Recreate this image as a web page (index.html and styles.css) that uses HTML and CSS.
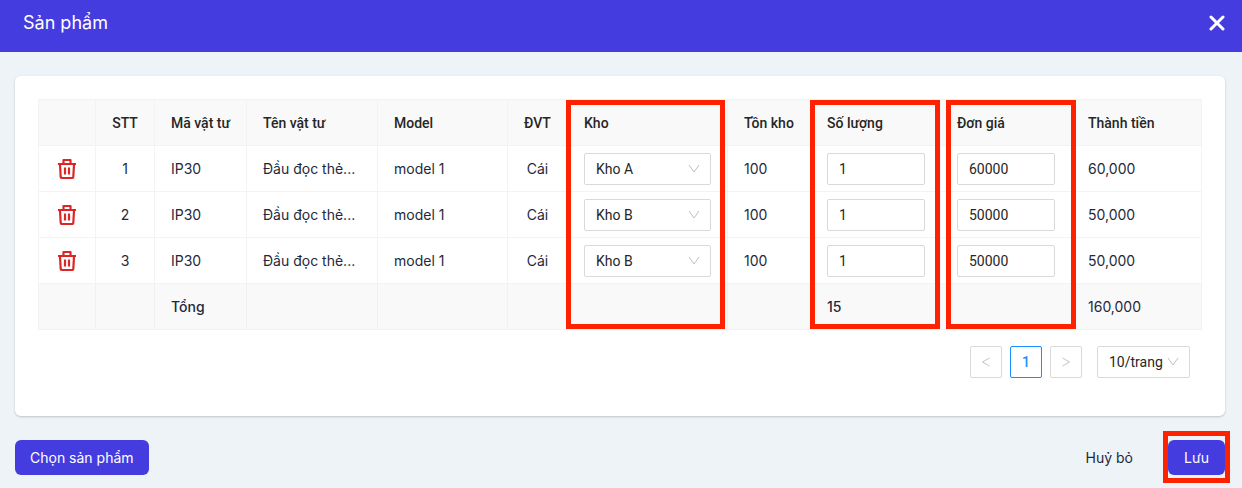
FILE: index.html
```
<!DOCTYPE html>
<html lang="vi">
<head>
<meta charset="utf-8">
<meta name="viewport" content="width=device-width, initial-scale=1">
<title>Sản phẩm</title>
<link rel="stylesheet" href="styles.css">
</head>
<body>
<svg class="sprite" aria-hidden="true">
  <symbol id="trash" viewBox="0 0 20 22">
    <path d="M1 6h18M6.500 5.500V2h7V5.500M3 6.500l.7 12.500Q3.900 20 4.900 20h10.200Q16.100 20 16.300 19L17 6.500M8 9.500v7M12 9.500v7" fill="none" stroke="currentColor" stroke-width="2.200" stroke-linejoin="round"/>
  </symbol>
  <symbol id="down" viewBox="0 0 12 12">
    <path d="M1 2L6 9L11 2" fill="none" stroke="currentColor"/>
  </symbol>
</svg>
<header class="topbar">
  <h1 class="title">Sản phẩm</h1>
  <button class="close" type="button" aria-label="Đóng">
    <svg width="16" height="16" viewBox="0 0 16 16" aria-hidden="true"><path d="M2 2l12 12M14 2L2 14" stroke="currentColor" stroke-width="3" stroke-linecap="round"/></svg>
  </button>
</header>
<main class="content">
  <section class="card">
    <table class="table">
      <colgroup>
        <col class="w-action"><col class="w-index"><col class="w-code"><col class="w-name"><col class="w-model"><col class="w-unit"><col class="w-store"><col class="w-stock"><col class="w-qty"><col class="w-price"><col class="w-total">
      </colgroup>
      <thead>
        <tr>
          <th></th><th class="center">STT</th><th>Mã vật tư</th><th>Tên vật tư</th><th>Model</th><th class="center">ĐVT</th>
          <th>Kho<span class="mark mark-store"></span></th><th>Tồn kho</th>
          <th>Số lượng<span class="mark mark-qty"></span></th>
          <th>Đơn giá<span class="mark mark-price"></span></th><th>Thành tiền</th>
        </tr>
      </thead>
      <tbody>
        <tr>
          <td class="center"><button class="delete" type="button" aria-label="Xoá dòng 1"><svg width="20" height="22"><use href="#trash"/></svg></button></td>
          <td class="center">1</td><td>IP30</td><td>Đầu đọc thẻ...</td><td>model 1</td><td class="center">Cái</td>
          <td><div class="picker"><select class="field" aria-label="Kho dòng 1"><option selected>Kho A</option><option>Kho B</option></select><svg class="arrow" width="12" height="12"><use href="#down"/></svg></div></td>
          <td>100</td>
          <td><input class="field number" type="text" value="1" aria-label="Số lượng dòng 1"></td>
          <td><input class="field number" type="text" value="60000" aria-label="Đơn giá dòng 1"></td>
          <td>60,000</td>
        </tr>
        <tr>
          <td class="center"><button class="delete" type="button" aria-label="Xoá dòng 2"><svg width="20" height="22"><use href="#trash"/></svg></button></td>
          <td class="center">2</td><td>IP30</td><td>Đầu đọc thẻ...</td><td>model 1</td><td class="center">Cái</td>
          <td><div class="picker"><select class="field" aria-label="Kho dòng 2"><option>Kho A</option><option selected>Kho B</option></select><svg class="arrow" width="12" height="12"><use href="#down"/></svg></div></td>
          <td>100</td>
          <td><input class="field number" type="text" value="1" aria-label="Số lượng dòng 2"></td>
          <td><input class="field number" type="text" value="50000" aria-label="Đơn giá dòng 2"></td>
          <td>50,000</td>
        </tr>
        <tr>
          <td class="center"><button class="delete" type="button" aria-label="Xoá dòng 3"><svg width="20" height="22"><use href="#trash"/></svg></button></td>
          <td class="center">3</td><td>IP30</td><td>Đầu đọc thẻ...</td><td>model 1</td><td class="center">Cái</td>
          <td><div class="picker"><select class="field" aria-label="Kho dòng 3"><option>Kho A</option><option selected>Kho B</option></select><svg class="arrow" width="12" height="12"><use href="#down"/></svg></div></td>
          <td>100</td>
          <td><input class="field number" type="text" value="1" aria-label="Số lượng dòng 3"></td>
          <td><input class="field number" type="text" value="50000" aria-label="Đơn giá dòng 3"></td>
          <td>50,000</td>
        </tr>
      </tbody>
      <tfoot>
        <tr><td></td><td></td><td class="strong">Tổng</td><td></td><td></td><td></td><td></td><td></td><td class="strong">15</td><td></td><td>160,000</td></tr>
      </tfoot>
    </table>
    <nav class="pagination" aria-label="Phân trang">
      <button class="page" type="button" disabled aria-label="Trang trước"><svg width="12" height="12" viewBox="0 0 12 12"><path d="M9.500 2L2.500 6L9.500 10" fill="none" stroke="currentColor"/></svg></button>
      <button class="page current" type="button" aria-current="page">1</button>
      <button class="page" type="button" disabled aria-label="Trang sau"><svg width="12" height="12" viewBox="0 0 12 12"><path d="M2.500 2L9.500 6L2.500 10" fill="none" stroke="currentColor"/></svg></button>
      <div class="picker page-size"><select class="field" aria-label="Số dòng mỗi trang"><option>10/trang</option></select><svg class="arrow" width="12" height="12"><use href="#down"/></svg></div>
    </nav>
  </section>
  <footer class="actions">
    <button class="btn primary" type="button">Chọn sản phẩm</button>
    <div class="right">
      <button class="btn plain" type="button">Huỷ bỏ</button>
      <span class="save"><button class="btn primary" type="button">Lưu</button><span class="mark mark-save"></span></span>
    </div>
  </footer>
</main>
</body>
</html>
```
FILE: styles.css
```
* { box-sizing: border-box; }
body {
  margin: 0;
  background: #eef3f8;
  color: #1e293b;
  font: 14px/20px Inter, "Noto Sans", sans-serif;
}
button, input, select { font: inherit; color: inherit; margin: 0; }
button { cursor: pointer; }
.sprite { display: none; }
.topbar {
  display: flex;
  align-items: center;
  justify-content: space-between;
  height: 52px;
  padding: 0 17px 6px 23px;
  background: #453ce0;
  color: #fff;
}
.title { margin: 0; font-size: 18px; font-weight: 400; line-height: 28px; }
.close { display: flex; padding: 0; border: 0; background: none; color: #fff; }
.content { padding: 24px 17px 12px 15px; }
.card {
  padding: 23px 23px 38px;
  border-radius: 6px;
  background: #fff;
  box-shadow: 0 1px 3px rgba(0, 0, 0, .1), 0 1px 2px rgba(0, 0, 0, .1);
}
.table {
  width: 100%;
  table-layout: fixed;
  border-collapse: separate;
  border-spacing: 0;
  border-top: 1px solid #f3f3f3;
  border-left: 1px solid #f3f3f3;
}
.w-action { width: 57px; }
.w-index { width: 59px; }
.w-code { width: 92px; }
.w-name { width: 131px; }
.w-model { width: 130px; }
.w-unit { width: 60px; }
.w-store { width: 160px; }
.w-stock { width: 83px; }
.w-qty { width: 130px; }
.w-price { width: 131px; }
.w-total { width: 130px; }
.table th, .table td {
  position: relative;
  height: 46px;
  padding: 0 16px;
  border-right: 1px solid #f3f3f3;
  border-bottom: 1px solid #f3f3f3;
  text-align: left;
  white-space: nowrap;
}
.table th {
  background: #f9f9f9;
  color: #262626;
  font-family: Roboto, "Noto Sans", sans-serif;
  font-weight: 500;
}
.table tfoot td { background: #f9f9f9; border-color: #f1f1f1; }
.table .center { padding: 0; text-align: center; }
.strong { font-weight: 500; }
.delete {
  display: inline-flex;
  padding: 0;
  border: 0;
  background: none;
  color: #dc2626;
  vertical-align: middle;
}
.field {
  display: block;
  width: 100%;
  height: 32px;
  padding: 0 11px;
  border: 1px solid #d9d9d9;
  border-radius: 2px;
  background: #fff;
  color: #262626;
  font-family: Roboto, "Noto Sans", sans-serif;
  appearance: none;
}
.number { width: 98px; }
.picker { position: relative; width: 127px; }
.arrow {
  position: absolute;
  top: 10px;
  right: 11px;
  color: #bfbfbf;
  pointer-events: none;
}
.pagination {
  display: flex;
  justify-content: flex-end;
  gap: 8px;
  padding: 16px 12px 0 0;
}
.page {
  display: grid;
  place-items: center;
  width: 32px;
  height: 32px;
  padding: 0;
  border: 1px solid #d9d9d9;
  border-radius: 2px;
  background: #fff;
  color: #bfc5d0;
}
.current { border-color: #1890ff; color: #1890ff; font-family: Roboto, sans-serif; font-weight: 500; }
.page-size { width: 93px; margin-left: 7px; }
.actions {
  display: flex;
  align-items: center;
  justify-content: space-between;
  padding-top: 24px;
}
.right { display: flex; gap: 20px; }
.btn { min-width: 57px; height: 35px; padding: 0 15px; border: 0; border-radius: 6px; }
.primary { background: #453ce0; color: #fff; }
.plain { background: none; }
.save { position: relative; display: flex; }
.mark {
  position: absolute;
  z-index: 1;
  top: 0;
  height: 229px;
  border: 5px solid #ff2200;
  pointer-events: none;
}
.mark-store { left: -2px; right: 2px; }
.mark-qty { left: -1px; right: 0; }
.mark-price { left: 5px; right: -5px; }
.mark-save { top: -9px; right: -5px; bottom: -8px; left: -5px; height: auto; }
```
